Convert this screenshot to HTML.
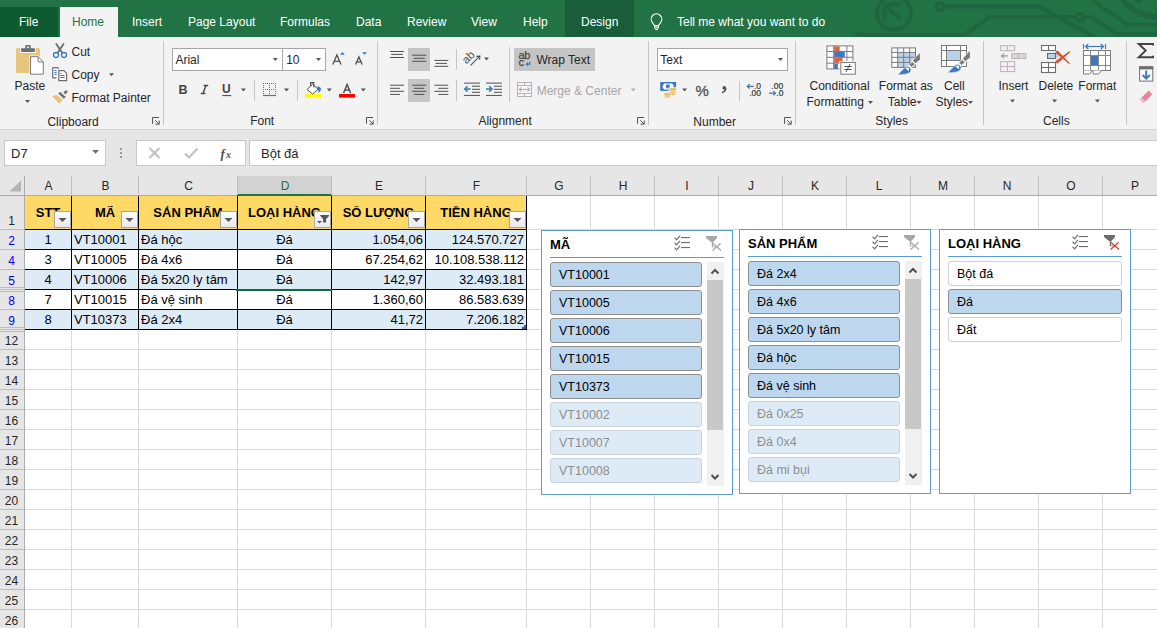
<!DOCTYPE html><html><head><meta charset="utf-8"><style>
*{margin:0;padding:0;box-sizing:border-box}
html,body{width:1157px;height:628px;overflow:hidden;background:#fff;font-family:"Liberation Sans",sans-serif;}
.ab{position:absolute}
.t{position:absolute;white-space:nowrap;line-height:1}
.ui{font-size:12px;color:#262626}
.tab{color:#fff;font-size:12px}

</style></head><body>
<div class="ab" style="left:0;top:0;width:1157px;height:37px;background:#217346"></div>
<div class="ab" style="left:0;top:7px;width:58px;height:30px;background:#0e5b31"></div>
<div class="ab" style="left:60px;top:7px;width:58px;height:30px;background:#f3f3f3"></div>
<div class="ab" style="left:565px;top:0;width:69px;height:37px;background:#1a5d3a"></div>
<svg class="ab" style="left:0;top:0;overflow:hidden" width="1157" height="37"><g fill="none" stroke="#1f6640" stroke-width="4"><circle cx="893.8" cy="13" r="17"/><polyline points="884.5,20.7 884.5,4.5 901,4.5"/><line x1="884.5" y1="4.5" x2="901" y2="19.5"/></g><g fill="none" stroke="#1f6640" stroke-width="3.8"><circle cx="940" cy="6.5" r="3.6"/><polyline points="943.5,6.5 1039,6.5 1095,37.5"/><polyline points="860,35 964,35 990,16.8 1076.5,16.8"/><circle cx="1080" cy="17" r="3.6"/><polyline points="1083.5,17 1091,17 1117,34 1160,34"/><polyline points="1092,0 1128,24.7 1160,24.7"/><circle cx="1160" cy="-32" r="49" stroke-width="5.6"/><circle cx="860" cy="37" r="3.6"/><polyline points="1080,28 1095,37.5"/></g><polygon points="1134,0 1143.5,0 1138.7,4.5" fill="#1f6640"/></svg>
<div class="t" style="left:19px;top:16px;font-size:12px;color:#fff">File</div>
<div class="t" style="left:72px;top:16px;font-size:12px;color:#217346">Home</div>
<div class="t" style="left:132px;top:16px;font-size:12px;color:#fff">Insert</div>
<div class="t" style="left:188px;top:16px;font-size:12px;color:#fff">Page Layout</div>
<div class="t" style="left:280px;top:16px;font-size:12px;color:#fff">Formulas</div>
<div class="t" style="left:356px;top:16px;font-size:12px;color:#fff">Data</div>
<div class="t" style="left:407px;top:16px;font-size:12px;color:#fff">Review</div>
<div class="t" style="left:471px;top:16px;font-size:12px;color:#fff">View</div>
<div class="t" style="left:523px;top:16px;font-size:12px;color:#fff">Help</div>
<div class="t" style="left:581px;top:16px;font-size:12px;color:#fff">Design</div>
<div class="t" style="left:677px;top:16px;font-size:12px;color:#fff">Tell me what you want to do</div>
<div class="ab" style="left:0;top:37px;width:1157px;height:92px;background:#f3f3f3"></div>
<div class="ab" style="left:0;top:129px;width:1157px;height:1px;background:#d5d5d5"></div>
<div class="ab" style="left:0;top:130px;width:1157px;height:46px;background:#e6e6e6"></div>
<div class="ab" style="left:4px;top:140px;width:102px;height:26px;background:#fff;border:1px solid #c6c6c6"></div>
<div class="ab" style="left:136px;top:140px;width:110px;height:26px;background:#fff;border:1px solid #c6c6c6"></div>
<div class="ab" style="left:249px;top:140px;width:920px;height:26px;background:#fff;border:1px solid #c6c6c6"></div>
<div class="t" style="left:11px;top:147px;font-size:13px;color:#262626">D7</div>
<div class="t" style="left:261px;top:147px;font-size:13px;color:#262626">Bột đá</div>
<div class="ab" style="left:0;top:176px;width:1157px;height:20px;background:#e6e6e6"></div>
<div class="ab" style="left:0;top:196px;width:24px;height:432px;background:#e6e6e6"></div>
<div class="ab" style="left:0;top:195px;width:1157px;height:1px;background:#ababab"></div>
<div class="ab" style="left:24px;top:176px;width:1px;height:452px;background:#ababab"></div>
<div class="ab" style="left:238px;top:176px;width:93px;height:18px;background:#d2d2d2"></div>
<div class="ab" style="left:237px;top:194px;width:95px;height:2px;background:#217346"></div>
<div class="ab" style="left:71px;top:176px;width:1px;height:19px;background:#bdbdbd"></div>
<div class="t" style="left:25px;width:47px;text-align:center;top:180px;font-size:12px;color:#262626">A</div>
<div class="ab" style="left:138px;top:176px;width:1px;height:19px;background:#bdbdbd"></div>
<div class="t" style="left:72px;width:67px;text-align:center;top:180px;font-size:12px;color:#262626">B</div>
<div class="ab" style="left:237px;top:176px;width:1px;height:19px;background:#bdbdbd"></div>
<div class="t" style="left:139px;width:99px;text-align:center;top:180px;font-size:12px;color:#262626">C</div>
<div class="ab" style="left:331px;top:176px;width:1px;height:19px;background:#bdbdbd"></div>
<div class="t" style="left:238px;width:94px;text-align:center;top:180px;font-size:12px;color:#217346">D</div>
<div class="ab" style="left:425px;top:176px;width:1px;height:19px;background:#bdbdbd"></div>
<div class="t" style="left:332px;width:94px;text-align:center;top:180px;font-size:12px;color:#262626">E</div>
<div class="ab" style="left:526px;top:176px;width:1px;height:19px;background:#bdbdbd"></div>
<div class="t" style="left:426px;width:101px;text-align:center;top:180px;font-size:12px;color:#262626">F</div>
<div class="ab" style="left:590px;top:176px;width:1px;height:19px;background:#bdbdbd"></div>
<div class="t" style="left:527px;width:64px;text-align:center;top:180px;font-size:12px;color:#262626">G</div>
<div class="ab" style="left:654px;top:176px;width:1px;height:19px;background:#bdbdbd"></div>
<div class="t" style="left:591px;width:64px;text-align:center;top:180px;font-size:12px;color:#262626">H</div>
<div class="ab" style="left:718px;top:176px;width:1px;height:19px;background:#bdbdbd"></div>
<div class="t" style="left:655px;width:64px;text-align:center;top:180px;font-size:12px;color:#262626">I</div>
<div class="ab" style="left:782px;top:176px;width:1px;height:19px;background:#bdbdbd"></div>
<div class="t" style="left:719px;width:64px;text-align:center;top:180px;font-size:12px;color:#262626">J</div>
<div class="ab" style="left:846px;top:176px;width:1px;height:19px;background:#bdbdbd"></div>
<div class="t" style="left:783px;width:64px;text-align:center;top:180px;font-size:12px;color:#262626">K</div>
<div class="ab" style="left:910px;top:176px;width:1px;height:19px;background:#bdbdbd"></div>
<div class="t" style="left:847px;width:64px;text-align:center;top:180px;font-size:12px;color:#262626">L</div>
<div class="ab" style="left:974px;top:176px;width:1px;height:19px;background:#bdbdbd"></div>
<div class="t" style="left:911px;width:64px;text-align:center;top:180px;font-size:12px;color:#262626">M</div>
<div class="ab" style="left:1038px;top:176px;width:1px;height:19px;background:#bdbdbd"></div>
<div class="t" style="left:975px;width:64px;text-align:center;top:180px;font-size:12px;color:#262626">N</div>
<div class="ab" style="left:1102px;top:176px;width:1px;height:19px;background:#bdbdbd"></div>
<div class="t" style="left:1039px;width:64px;text-align:center;top:180px;font-size:12px;color:#262626">O</div>
<div class="ab" style="left:1166px;top:176px;width:1px;height:19px;background:#bdbdbd"></div>
<div class="t" style="left:1103px;width:64px;text-align:center;top:180px;font-size:12px;color:#262626">P</div>
<div class="ab" style="left:25px;top:196px;width:1132px;height:432px;background:#fff"></div>
<div class="ab" style="left:71px;top:196px;width:1px;height:432px;background:#d9d9d9"></div>
<div class="ab" style="left:138px;top:196px;width:1px;height:432px;background:#d9d9d9"></div>
<div class="ab" style="left:237px;top:196px;width:1px;height:432px;background:#d9d9d9"></div>
<div class="ab" style="left:331px;top:196px;width:1px;height:432px;background:#d9d9d9"></div>
<div class="ab" style="left:425px;top:196px;width:1px;height:432px;background:#d9d9d9"></div>
<div class="ab" style="left:526px;top:196px;width:1px;height:432px;background:#d9d9d9"></div>
<div class="ab" style="left:590px;top:196px;width:1px;height:432px;background:#d9d9d9"></div>
<div class="ab" style="left:654px;top:196px;width:1px;height:432px;background:#d9d9d9"></div>
<div class="ab" style="left:718px;top:196px;width:1px;height:432px;background:#d9d9d9"></div>
<div class="ab" style="left:782px;top:196px;width:1px;height:432px;background:#d9d9d9"></div>
<div class="ab" style="left:846px;top:196px;width:1px;height:432px;background:#d9d9d9"></div>
<div class="ab" style="left:910px;top:196px;width:1px;height:432px;background:#d9d9d9"></div>
<div class="ab" style="left:974px;top:196px;width:1px;height:432px;background:#d9d9d9"></div>
<div class="ab" style="left:1038px;top:196px;width:1px;height:432px;background:#d9d9d9"></div>
<div class="ab" style="left:1102px;top:196px;width:1px;height:432px;background:#d9d9d9"></div>
<div class="ab" style="left:1166px;top:196px;width:1px;height:432px;background:#d9d9d9"></div>
<div class="ab" style="left:25px;top:229px;width:1132px;height:1px;background:#d9d9d9"></div>
<div class="ab" style="left:25px;top:249px;width:1132px;height:1px;background:#d9d9d9"></div>
<div class="ab" style="left:25px;top:269px;width:1132px;height:1px;background:#d9d9d9"></div>
<div class="ab" style="left:25px;top:289px;width:1132px;height:1px;background:#d9d9d9"></div>
<div class="ab" style="left:25px;top:309px;width:1132px;height:1px;background:#d9d9d9"></div>
<div class="ab" style="left:25px;top:329px;width:1132px;height:1px;background:#d9d9d9"></div>
<div class="ab" style="left:25px;top:349px;width:1132px;height:1px;background:#d9d9d9"></div>
<div class="ab" style="left:25px;top:369px;width:1132px;height:1px;background:#d9d9d9"></div>
<div class="ab" style="left:25px;top:389px;width:1132px;height:1px;background:#d9d9d9"></div>
<div class="ab" style="left:25px;top:409px;width:1132px;height:1px;background:#d9d9d9"></div>
<div class="ab" style="left:25px;top:429px;width:1132px;height:1px;background:#d9d9d9"></div>
<div class="ab" style="left:25px;top:449px;width:1132px;height:1px;background:#d9d9d9"></div>
<div class="ab" style="left:25px;top:469px;width:1132px;height:1px;background:#d9d9d9"></div>
<div class="ab" style="left:25px;top:489px;width:1132px;height:1px;background:#d9d9d9"></div>
<div class="ab" style="left:25px;top:509px;width:1132px;height:1px;background:#d9d9d9"></div>
<div class="ab" style="left:25px;top:529px;width:1132px;height:1px;background:#d9d9d9"></div>
<div class="ab" style="left:25px;top:549px;width:1132px;height:1px;background:#d9d9d9"></div>
<div class="ab" style="left:25px;top:569px;width:1132px;height:1px;background:#d9d9d9"></div>
<div class="ab" style="left:25px;top:589px;width:1132px;height:1px;background:#d9d9d9"></div>
<div class="ab" style="left:25px;top:609px;width:1132px;height:1px;background:#d9d9d9"></div>
<div class="ab" style="left:25px;top:629px;width:1132px;height:1px;background:#d9d9d9"></div>
<div class="ab" style="left:0;top:229px;width:24px;height:1px;background:#bdbdbd"></div>
<div class="t" style="left:0;width:23px;text-align:center;top:215px;font-size:12px;color:#262626">1</div>
<div class="ab" style="left:0;top:249px;width:24px;height:1px;background:#bdbdbd"></div>
<div class="t" style="left:0;width:23px;text-align:center;top:235px;font-size:12px;color:#0000ff">2</div>
<div class="ab" style="left:0;top:269px;width:24px;height:1px;background:#bdbdbd"></div>
<div class="t" style="left:0;width:23px;text-align:center;top:255px;font-size:12px;color:#0000ff">4</div>
<div class="ab" style="left:0;top:289px;width:24px;height:1px;background:#bdbdbd"></div>
<div class="t" style="left:0;width:23px;text-align:center;top:275px;font-size:12px;color:#0000ff">5</div>
<div class="ab" style="left:0;top:309px;width:24px;height:1px;background:#bdbdbd"></div>
<div class="t" style="left:0;width:23px;text-align:center;top:295px;font-size:12px;color:#0000ff">8</div>
<div class="ab" style="left:0;top:329px;width:24px;height:1px;background:#bdbdbd"></div>
<div class="t" style="left:0;width:23px;text-align:center;top:315px;font-size:12px;color:#0000ff">9</div>
<div class="ab" style="left:0;top:349px;width:24px;height:1px;background:#bdbdbd"></div>
<div class="t" style="left:0;width:23px;text-align:center;top:335px;font-size:12px;color:#262626">12</div>
<div class="ab" style="left:0;top:369px;width:24px;height:1px;background:#bdbdbd"></div>
<div class="t" style="left:0;width:23px;text-align:center;top:355px;font-size:12px;color:#262626">13</div>
<div class="ab" style="left:0;top:389px;width:24px;height:1px;background:#bdbdbd"></div>
<div class="t" style="left:0;width:23px;text-align:center;top:375px;font-size:12px;color:#262626">14</div>
<div class="ab" style="left:0;top:409px;width:24px;height:1px;background:#bdbdbd"></div>
<div class="t" style="left:0;width:23px;text-align:center;top:395px;font-size:12px;color:#262626">15</div>
<div class="ab" style="left:0;top:429px;width:24px;height:1px;background:#bdbdbd"></div>
<div class="t" style="left:0;width:23px;text-align:center;top:415px;font-size:12px;color:#262626">16</div>
<div class="ab" style="left:0;top:449px;width:24px;height:1px;background:#bdbdbd"></div>
<div class="t" style="left:0;width:23px;text-align:center;top:435px;font-size:12px;color:#262626">17</div>
<div class="ab" style="left:0;top:469px;width:24px;height:1px;background:#bdbdbd"></div>
<div class="t" style="left:0;width:23px;text-align:center;top:455px;font-size:12px;color:#262626">18</div>
<div class="ab" style="left:0;top:489px;width:24px;height:1px;background:#bdbdbd"></div>
<div class="t" style="left:0;width:23px;text-align:center;top:475px;font-size:12px;color:#262626">19</div>
<div class="ab" style="left:0;top:509px;width:24px;height:1px;background:#bdbdbd"></div>
<div class="t" style="left:0;width:23px;text-align:center;top:495px;font-size:12px;color:#262626">20</div>
<div class="ab" style="left:0;top:529px;width:24px;height:1px;background:#bdbdbd"></div>
<div class="t" style="left:0;width:23px;text-align:center;top:515px;font-size:12px;color:#262626">21</div>
<div class="ab" style="left:0;top:549px;width:24px;height:1px;background:#bdbdbd"></div>
<div class="t" style="left:0;width:23px;text-align:center;top:535px;font-size:12px;color:#262626">22</div>
<div class="ab" style="left:0;top:569px;width:24px;height:1px;background:#bdbdbd"></div>
<div class="t" style="left:0;width:23px;text-align:center;top:555px;font-size:12px;color:#262626">23</div>
<div class="ab" style="left:0;top:589px;width:24px;height:1px;background:#bdbdbd"></div>
<div class="t" style="left:0;width:23px;text-align:center;top:575px;font-size:12px;color:#262626">24</div>
<div class="ab" style="left:0;top:609px;width:24px;height:1px;background:#bdbdbd"></div>
<div class="t" style="left:0;width:23px;text-align:center;top:595px;font-size:12px;color:#262626">25</div>
<div class="ab" style="left:0;top:629px;width:24px;height:1px;background:#bdbdbd"></div>
<div class="t" style="left:0;width:23px;text-align:center;top:615px;font-size:12px;color:#262626">26</div>
<div class="ab" style="left:0;top:287px;width:24px;height:1px;background:#bdbdbd"></div>
<div class="ab" style="left:0;top:291px;width:24px;height:1px;background:#bdbdbd"></div>
<div class="ab" style="left:0;top:327px;width:24px;height:1px;background:#bdbdbd"></div>
<div class="ab" style="left:0;top:331px;width:24px;height:1px;background:#bdbdbd"></div>
<svg class="ab" style="left:0;top:176px" width="24" height="20"><polygon points="9.5,15.5 21,15.5 21,4.5" fill="#b4b4b4"/></svg>
<div class="ab" style="left:25px;top:196px;width:501px;height:33px;background:#ffd966"></div>
<div class="ab" style="left:25px;top:230px;width:501px;height:19px;background:#ddebf7"></div>
<div class="ab" style="left:25px;top:270px;width:501px;height:19px;background:#ddebf7"></div>
<div class="ab" style="left:25px;top:310px;width:501px;height:19px;background:#ddebf7"></div>
<div class="ab" style="left:71px;top:196px;width:1px;height:134px;background:#000"></div>
<div class="ab" style="left:138px;top:196px;width:1px;height:134px;background:#000"></div>
<div class="ab" style="left:237px;top:196px;width:1px;height:134px;background:#000"></div>
<div class="ab" style="left:331px;top:196px;width:1px;height:134px;background:#000"></div>
<div class="ab" style="left:425px;top:196px;width:1px;height:134px;background:#000"></div>
<div class="ab" style="left:526px;top:196px;width:1px;height:134px;background:#000"></div>
<div class="ab" style="left:25px;top:229px;width:502px;height:1px;background:#000"></div>
<div class="ab" style="left:25px;top:249px;width:502px;height:1px;background:#000"></div>
<div class="ab" style="left:25px;top:269px;width:502px;height:1px;background:#000"></div>
<div class="ab" style="left:25px;top:289px;width:502px;height:1px;background:#000"></div>
<div class="ab" style="left:25px;top:309px;width:502px;height:1px;background:#000"></div>
<div class="ab" style="left:25px;top:329px;width:502px;height:1px;background:#000"></div>
<div class="t" style="left:25px;width:46px;text-align:center;top:206px;font-size:13px;font-weight:bold;color:#000;overflow:hidden">STT</div>
<div class="t" style="left:72px;width:66px;text-align:center;top:206px;font-size:13px;font-weight:bold;color:#000;overflow:hidden">MÃ</div>
<div class="t" style="left:139px;width:98px;text-align:center;top:206px;font-size:13px;font-weight:bold;color:#000;overflow:hidden">SẢN PHẨM</div>
<div class="t" style="left:238px;width:93px;text-align:center;top:206px;font-size:13px;font-weight:bold;color:#000;overflow:hidden">LOẠI HÀNG</div>
<div class="t" style="left:332px;width:93px;text-align:center;top:206px;font-size:13px;font-weight:bold;color:#000;overflow:hidden">SỐ LƯỢNG</div>
<div class="t" style="left:426px;width:100px;text-align:center;top:206px;font-size:13px;font-weight:bold;color:#000;overflow:hidden">TIỀN HÀNG</div>
<div class="ab" style="left:54px;top:211px;width:17px;height:17px;background:linear-gradient(#fdfdfd,#e9e9ee);border:1px solid #a6a6a6"></div>
<svg class="ab" style="left:54px;top:211px" width="17" height="17"><polygon points="4.5,7 12.5,7 8.5,11" fill="#555"/></svg>
<div class="ab" style="left:121px;top:211px;width:17px;height:17px;background:linear-gradient(#fdfdfd,#e9e9ee);border:1px solid #a6a6a6"></div>
<svg class="ab" style="left:121px;top:211px" width="17" height="17"><polygon points="4.5,7 12.5,7 8.5,11" fill="#555"/></svg>
<div class="ab" style="left:220px;top:211px;width:17px;height:17px;background:linear-gradient(#fdfdfd,#e9e9ee);border:1px solid #a6a6a6"></div>
<svg class="ab" style="left:220px;top:211px" width="17" height="17"><polygon points="4.5,7 12.5,7 8.5,11" fill="#555"/></svg>
<div class="ab" style="left:314px;top:211px;width:17px;height:17px;background:linear-gradient(#fdfdfd,#e9e9ee);border:1px solid #a6a6a6"></div>
<svg class="ab" style="left:314px;top:211px" width="17" height="17"><polygon points="3,10 8,10 5.5,12.5" fill="#555"/><polygon points="6.3,4 15,4 15,5 12.1,8 12.1,11.6 9.1,11.6 9.1,8 6.3,5" fill="#555"/></svg>
<div class="ab" style="left:408px;top:211px;width:17px;height:17px;background:linear-gradient(#fdfdfd,#e9e9ee);border:1px solid #a6a6a6"></div>
<svg class="ab" style="left:408px;top:211px" width="17" height="17"><polygon points="4.5,7 12.5,7 8.5,11" fill="#555"/></svg>
<div class="ab" style="left:509px;top:211px;width:17px;height:17px;background:linear-gradient(#fdfdfd,#e9e9ee);border:1px solid #a6a6a6"></div>
<svg class="ab" style="left:509px;top:211px" width="17" height="17"><polygon points="4.5,7 12.5,7 8.5,11" fill="#555"/></svg>
<div class="t" style="left:25px;width:46px;text-align:center;top:233px;font-size:13px;color:#000">1</div>
<div class="t" style="left:74px;top:233px;font-size:13px;color:#000">VT10001</div>
<div class="t" style="left:141px;top:233px;font-size:13px;color:#000">Đá hộc</div>
<div class="t" style="left:238px;width:93px;text-align:center;top:233px;font-size:13px;color:#000">Đá</div>
<div class="t" style="left:332px;width:91px;text-align:right;top:233px;font-size:13px;color:#000">1.054,06</div>
<div class="t" style="left:426px;width:98px;text-align:right;top:233px;font-size:13px;color:#000">124.570.727</div>
<div class="t" style="left:25px;width:46px;text-align:center;top:253px;font-size:13px;color:#000">3</div>
<div class="t" style="left:74px;top:253px;font-size:13px;color:#000">VT10005</div>
<div class="t" style="left:141px;top:253px;font-size:13px;color:#000">Đá 4x6</div>
<div class="t" style="left:238px;width:93px;text-align:center;top:253px;font-size:13px;color:#000">Đá</div>
<div class="t" style="left:332px;width:91px;text-align:right;top:253px;font-size:13px;color:#000">67.254,62</div>
<div class="t" style="left:426px;width:98px;text-align:right;top:253px;font-size:13px;color:#000">10.108.538.112</div>
<div class="t" style="left:25px;width:46px;text-align:center;top:273px;font-size:13px;color:#000">4</div>
<div class="t" style="left:74px;top:273px;font-size:13px;color:#000">VT10006</div>
<div class="t" style="left:141px;top:273px;font-size:13px;color:#000">Đá 5x20 ly tâm</div>
<div class="t" style="left:238px;width:93px;text-align:center;top:273px;font-size:13px;color:#000">Đá</div>
<div class="t" style="left:332px;width:91px;text-align:right;top:273px;font-size:13px;color:#000">142,97</div>
<div class="t" style="left:426px;width:98px;text-align:right;top:273px;font-size:13px;color:#000">32.493.181</div>
<div class="t" style="left:25px;width:46px;text-align:center;top:293px;font-size:13px;color:#000">7</div>
<div class="t" style="left:74px;top:293px;font-size:13px;color:#000">VT10015</div>
<div class="t" style="left:141px;top:293px;font-size:13px;color:#000">Đá vệ sinh</div>
<div class="t" style="left:238px;width:93px;text-align:center;top:293px;font-size:13px;color:#000">Đá</div>
<div class="t" style="left:332px;width:91px;text-align:right;top:293px;font-size:13px;color:#000">1.360,60</div>
<div class="t" style="left:426px;width:98px;text-align:right;top:293px;font-size:13px;color:#000">86.583.639</div>
<div class="t" style="left:25px;width:46px;text-align:center;top:313px;font-size:13px;color:#000">8</div>
<div class="t" style="left:74px;top:313px;font-size:13px;color:#000">VT10373</div>
<div class="t" style="left:141px;top:313px;font-size:13px;color:#000">Đá 2x4</div>
<div class="t" style="left:238px;width:93px;text-align:center;top:313px;font-size:13px;color:#000">Đá</div>
<div class="t" style="left:332px;width:91px;text-align:right;top:313px;font-size:13px;color:#000">41,72</div>
<div class="t" style="left:426px;width:98px;text-align:right;top:313px;font-size:13px;color:#000">7.206.182</div>
<div class="ab" style="left:236px;top:289px;width:96px;height:2px;background:#12693a"></div>
<svg class="ab" style="left:520px;top:323px" width="8" height="8"><path d="M4,2 h2 v4 h-4 v-2 h2 z" fill="#4155b0"/></svg>
<div class="ab" style="left:541px;top:230px;width:192px;height:265px;background:#fff;border:1px solid #5b9bd5"></div>
<div class="t" style="left:550px;top:237.5px;font-size:13px;font-weight:bold;color:#000">MÃ</div>
<div class="ab" style="left:550px;top:257px;width:174px;height:1px;background:#5b9bd5"></div>
<div class="ab" style="left:550px;top:262px;width:152px;height:25px;background:#bdd7ee;border:1px solid #8f8f8f;border-radius:3px"></div>
<div class="t" style="left:559px;top:268.5px;font-size:12.5px;color:#000">VT10001</div>
<div class="ab" style="left:550px;top:290px;width:152px;height:25px;background:#bdd7ee;border:1px solid #8f8f8f;border-radius:3px"></div>
<div class="t" style="left:559px;top:296.5px;font-size:12.5px;color:#000">VT10005</div>
<div class="ab" style="left:550px;top:318px;width:152px;height:25px;background:#bdd7ee;border:1px solid #8f8f8f;border-radius:3px"></div>
<div class="t" style="left:559px;top:324.5px;font-size:12.5px;color:#000">VT10006</div>
<div class="ab" style="left:550px;top:346px;width:152px;height:25px;background:#bdd7ee;border:1px solid #8f8f8f;border-radius:3px"></div>
<div class="t" style="left:559px;top:352.5px;font-size:12.5px;color:#000">VT10015</div>
<div class="ab" style="left:550px;top:374px;width:152px;height:25px;background:#bdd7ee;border:1px solid #8f8f8f;border-radius:3px"></div>
<div class="t" style="left:559px;top:380.5px;font-size:12.5px;color:#000">VT10373</div>
<div class="ab" style="left:550px;top:402px;width:152px;height:25px;background:#ddebf7;border:1px solid #c9d3dd;border-radius:3px"></div>
<div class="t" style="left:559px;top:408.5px;font-size:12.5px;color:#8f8f8f">VT10002</div>
<div class="ab" style="left:550px;top:430px;width:152px;height:25px;background:#ddebf7;border:1px solid #c9d3dd;border-radius:3px"></div>
<div class="t" style="left:559px;top:436.5px;font-size:12.5px;color:#8f8f8f">VT10007</div>
<div class="ab" style="left:550px;top:458px;width:152px;height:25px;background:#ddebf7;border:1px solid #c9d3dd;border-radius:3px"></div>
<div class="t" style="left:559px;top:464.5px;font-size:12.5px;color:#8f8f8f">VT10008</div>
<div class="ab" style="left:707px;top:262px;width:17px;height:224px;background:#f0f0f0"></div>
<div class="ab" style="left:707px;top:280px;width:16px;height:150px;background:#c8c8c8"></div>
<svg class="ab" style="left:707px;top:262px" width="17" height="224"><polyline points="4.5,11.5 8,8 11.5,11.5" fill="none" stroke="#505050" stroke-width="2"/><polyline points="4.5,213 8,216.5 11.5,213" fill="none" stroke="#505050" stroke-width="2"/></svg>
<svg class="ab" style="left:674px;top:235px" width="18" height="18"><g fill="none" stroke="#6d6d6d" stroke-width="1.2"><polyline points="0.6,2.6 2.6,4.8 6,0.8"/><polyline points="0.6,7.6 2.6,9.8 6,5.8"/><polyline points="0.6,12.7 2.6,14.9 6,10.9"/></g><g fill="#6d6d6d"><rect x="7" y="2" width="9" height="1.1"/><rect x="7" y="7" width="9" height="1.1"/><rect x="7" y="12" width="9" height="1.1"/></g></svg>
<svg class="ab" style="left:705px;top:235px" width="20" height="20"><polygon points="1,1 12,1 12,3 8,7.5 8,11.5 10,11.5 10,12.3 6.8,12.3 6.8,7.5 1,3" fill="#a8a8a8"/><g stroke="#a8a8a8" stroke-width="1.3"><line x1="7.5" y1="15.5" x2="15.5" y2="8.5"/><line x1="8" y1="8.5" x2="16" y2="15.5"/></g></svg>
<div class="ab" style="left:739px;top:229px;width:192px;height:265px;background:#fff;border:1px solid #5b9bd5"></div>
<div class="t" style="left:748px;top:236.5px;font-size:13px;font-weight:bold;color:#000">SẢN PHẨM</div>
<div class="ab" style="left:748px;top:256px;width:174px;height:1px;background:#5b9bd5"></div>
<div class="ab" style="left:748px;top:261px;width:152px;height:25px;background:#bdd7ee;border:1px solid #8f8f8f;border-radius:3px"></div>
<div class="t" style="left:757px;top:267.5px;font-size:12.5px;color:#000">Đá 2x4</div>
<div class="ab" style="left:748px;top:289px;width:152px;height:25px;background:#bdd7ee;border:1px solid #8f8f8f;border-radius:3px"></div>
<div class="t" style="left:757px;top:295.5px;font-size:12.5px;color:#000">Đá 4x6</div>
<div class="ab" style="left:748px;top:317px;width:152px;height:25px;background:#bdd7ee;border:1px solid #8f8f8f;border-radius:3px"></div>
<div class="t" style="left:757px;top:323.5px;font-size:12.5px;color:#000">Đá 5x20 ly tâm</div>
<div class="ab" style="left:748px;top:345px;width:152px;height:25px;background:#bdd7ee;border:1px solid #8f8f8f;border-radius:3px"></div>
<div class="t" style="left:757px;top:351.5px;font-size:12.5px;color:#000">Đá hộc</div>
<div class="ab" style="left:748px;top:373px;width:152px;height:25px;background:#bdd7ee;border:1px solid #8f8f8f;border-radius:3px"></div>
<div class="t" style="left:757px;top:379.5px;font-size:12.5px;color:#000">Đá vệ sinh</div>
<div class="ab" style="left:748px;top:401px;width:152px;height:25px;background:#ddebf7;border:1px solid #c9d3dd;border-radius:3px"></div>
<div class="t" style="left:757px;top:407.5px;font-size:12.5px;color:#8f8f8f">Đá 0x25</div>
<div class="ab" style="left:748px;top:429px;width:152px;height:25px;background:#ddebf7;border:1px solid #c9d3dd;border-radius:3px"></div>
<div class="t" style="left:757px;top:435.5px;font-size:12.5px;color:#8f8f8f">Đá 0x4</div>
<div class="ab" style="left:748px;top:457px;width:152px;height:25px;background:#ddebf7;border:1px solid #c9d3dd;border-radius:3px"></div>
<div class="t" style="left:757px;top:463.5px;font-size:12.5px;color:#8f8f8f">Đá mi bụi</div>
<div class="ab" style="left:905px;top:261px;width:17px;height:224px;background:#f0f0f0"></div>
<div class="ab" style="left:905px;top:279px;width:16px;height:150px;background:#c8c8c8"></div>
<svg class="ab" style="left:905px;top:261px" width="17" height="224"><polyline points="4.5,11.5 8,8 11.5,11.5" fill="none" stroke="#505050" stroke-width="2"/><polyline points="4.5,213 8,216.5 11.5,213" fill="none" stroke="#505050" stroke-width="2"/></svg>
<svg class="ab" style="left:872px;top:234px" width="18" height="18"><g fill="none" stroke="#6d6d6d" stroke-width="1.2"><polyline points="0.6,2.6 2.6,4.8 6,0.8"/><polyline points="0.6,7.6 2.6,9.8 6,5.8"/><polyline points="0.6,12.7 2.6,14.9 6,10.9"/></g><g fill="#6d6d6d"><rect x="7" y="2" width="9" height="1.1"/><rect x="7" y="7" width="9" height="1.1"/><rect x="7" y="12" width="9" height="1.1"/></g></svg>
<svg class="ab" style="left:903px;top:234px" width="20" height="20"><polygon points="1,1 12,1 12,3 8,7.5 8,11.5 10,11.5 10,12.3 6.8,12.3 6.8,7.5 1,3" fill="#a8a8a8"/><g stroke="#a8a8a8" stroke-width="1.3"><line x1="7.5" y1="15.5" x2="15.5" y2="8.5"/><line x1="8" y1="8.5" x2="16" y2="15.5"/></g></svg>
<div class="ab" style="left:939px;top:229px;width:192px;height:265px;background:#fff;border:1px solid #5b9bd5"></div>
<div class="t" style="left:948px;top:236.5px;font-size:13px;font-weight:bold;color:#000">LOẠI HÀNG</div>
<div class="ab" style="left:948px;top:256px;width:174px;height:1px;background:#5b9bd5"></div>
<div class="ab" style="left:948px;top:261px;width:174px;height:25px;background:#fff;border:1px solid #d0d0d0;border-radius:3px"></div>
<div class="t" style="left:957px;top:267.5px;font-size:12.5px;color:#000">Bột đá</div>
<div class="ab" style="left:948px;top:289px;width:174px;height:25px;background:#bdd7ee;border:1px solid #8f8f8f;border-radius:3px"></div>
<div class="t" style="left:957px;top:295.5px;font-size:12.5px;color:#000">Đá</div>
<div class="ab" style="left:948px;top:317px;width:174px;height:25px;background:#fff;border:1px solid #d0d0d0;border-radius:3px"></div>
<div class="t" style="left:957px;top:323.5px;font-size:12.5px;color:#000">Đất</div>
<svg class="ab" style="left:1072px;top:234px" width="18" height="18"><g fill="none" stroke="#6d6d6d" stroke-width="1.2"><polyline points="0.6,2.6 2.6,4.8 6,0.8"/><polyline points="0.6,7.6 2.6,9.8 6,5.8"/><polyline points="0.6,12.7 2.6,14.9 6,10.9"/></g><g fill="#6d6d6d"><rect x="7" y="2" width="9" height="1.1"/><rect x="7" y="7" width="9" height="1.1"/><rect x="7" y="12" width="9" height="1.1"/></g></svg>
<svg class="ab" style="left:1103px;top:234px" width="20" height="20"><polygon points="1,1 12,1 12,3 8,7.5 8,11.5 10,11.5 10,12.3 6.8,12.3 6.8,7.5 1,3" fill="#6d6d6d"/><g stroke="#e0402a" stroke-width="1.3"><line x1="7.5" y1="15.5" x2="15.5" y2="8.5"/><line x1="8" y1="8.5" x2="16" y2="15.5"/></g></svg>
<div class="ab" style="left:163px;top:41px;width:1px;height:84px;background:#c6c6c6"></div>
<div class="ab" style="left:377px;top:41px;width:1px;height:84px;background:#c6c6c6"></div>
<div class="ab" style="left:648px;top:41px;width:1px;height:84px;background:#c6c6c6"></div>
<div class="ab" style="left:795px;top:41px;width:1px;height:84px;background:#c6c6c6"></div>
<div class="ab" style="left:983px;top:41px;width:1px;height:84px;background:#c6c6c6"></div>
<div class="ab" style="left:1126px;top:41px;width:1px;height:84px;background:#c6c6c6"></div>
<div class="ab" style="left:254px;top:80px;width:1px;height:21px;background:#c6c6c6"></div>
<div class="ab" style="left:297px;top:80px;width:1px;height:21px;background:#c6c6c6"></div>
<div class="ab" style="left:456px;top:49px;width:1px;height:21px;background:#c6c6c6"></div>
<div class="ab" style="left:456px;top:80px;width:1px;height:21px;background:#c6c6c6"></div>
<div class="ab" style="left:509px;top:47px;width:1px;height:55px;background:#c6c6c6"></div>
<div class="ab" style="left:739px;top:81px;width:1px;height:20px;background:#c6c6c6"></div>
<div class="ab" style="left:408px;top:48px;width:22px;height:23px;background:#c5c5c5"></div>
<div class="ab" style="left:408px;top:79px;width:22px;height:23px;background:#c5c5c5"></div>
<div class="ab" style="left:514px;top:48px;width:81px;height:23px;background:#c5c5c5"></div>
<div class="ab" style="left:172px;top:48px;width:111px;height:23px;background:#fff;border:1px solid #a6a6a6"></div>
<div class="ab" style="left:282px;top:48px;width:44px;height:23px;background:#fff;border:1px solid #a6a6a6"></div>
<div class="ab" style="left:657px;top:48px;width:131px;height:23px;background:#fff;border:1px solid #a6a6a6"></div>
<div class="t" style="left:14.5px;top:79.84px;font-size:12px;color:#262626;font-weight:normal;">Paste</div>
<div class="t" style="left:71.5px;top:45.54px;font-size:12px;color:#262626;font-weight:normal;">Cut</div>
<div class="t" style="left:71.5px;top:69.24px;font-size:12px;color:#262626;font-weight:normal;">Copy</div>
<div class="t" style="left:71.5px;top:91.64px;font-size:12px;color:#262626;font-weight:normal;">Format Painter</div>
<div class="t" style="left:47.4px;top:115.64px;font-size:12px;color:#262626;font-weight:normal;">Clipboard</div>
<div class="t" style="left:175.4px;top:54.44px;font-size:12px;color:#262626;font-weight:normal;">Arial</div>
<div class="t" style="left:286.2px;top:54.44px;font-size:12px;color:#262626;font-weight:normal;">10</div>
<div class="t" style="left:250.2px;top:115.34px;font-size:12px;color:#262626;font-weight:normal;">Font</div>
<div class="t" style="left:536.4px;top:53.84px;font-size:12px;color:#262626;font-weight:normal;">Wrap Text</div>
<div class="t" style="left:536.7px;top:84.84px;font-size:12px;color:#a6a6a6;font-weight:normal;">Merge &amp; Center</div>
<div class="t" style="left:478.4px;top:115.44px;font-size:12px;color:#262626;font-weight:normal;">Alignment</div>
<div class="t" style="left:660.3px;top:53.64px;font-size:12px;color:#262626;font-weight:normal;">Text</div>
<div class="t" style="left:693.3px;top:115.54px;font-size:12px;color:#262626;font-weight:normal;">Number</div>
<div class="t" style="left:809.5px;top:79.74px;font-size:12px;color:#262626;font-weight:normal;">Conditional</div>
<div class="t" style="left:806.5px;top:96.04px;font-size:12px;color:#262626;font-weight:normal;">Formatting</div>
<div class="t" style="left:878.8px;top:79.74px;font-size:12px;color:#262626;font-weight:normal;">Format as</div>
<div class="t" style="left:887.8px;top:96.04px;font-size:12px;color:#262626;font-weight:normal;">Table</div>
<div class="t" style="left:944px;top:79.74px;font-size:12px;color:#262626;font-weight:normal;">Cell</div>
<div class="t" style="left:935.4px;top:96.04px;font-size:12px;color:#262626;font-weight:normal;">Styles</div>
<div class="t" style="left:875.3px;top:114.84px;font-size:12px;color:#262626;font-weight:normal;">Styles</div>
<div class="t" style="left:998.4px;top:79.64px;font-size:12px;color:#262626;font-weight:normal;">Insert</div>
<div class="t" style="left:1038.5px;top:79.64px;font-size:12px;color:#262626;font-weight:normal;">Delete</div>
<div class="t" style="left:1078.3px;top:79.64px;font-size:12px;color:#262626;font-weight:normal;">Format</div>
<div class="t" style="left:1043px;top:115.24px;font-size:12px;color:#262626;font-weight:normal;">Cells</div>
<svg class="ab" style="left:0;top:0" width="1157" height="628"><polygon points="25.0,100 30.0,100 27.5,103" fill="#555"/><polygon points="109.0,73.3 114.0,73.3 111.5,76.3" fill="#555"/><polygon points="240.9,88.5 245.9,88.5 243.4,91.5" fill="#555"/><polygon points="284.0,88.5 289.0,88.5 286.5,91.5" fill="#555"/><polygon points="326.8,88.5 331.8,88.5 329.3,91.5" fill="#555"/><polygon points="360.8,88.5 365.8,88.5 363.3,91.5" fill="#555"/><polygon points="484.0,57.5 489.0,57.5 486.5,60.5" fill="#555"/><polygon points="682.1,88.5 687.1,88.5 684.6,91.5" fill="#555"/><polygon points="272.8,58 277.8,58 275.3,61" fill="#555"/><polygon points="316.0,58 321.0,58 318.5,61" fill="#555"/><polygon points="778.0,58 783.0,58 780.5,61" fill="#555"/><polygon points="630.8,88.5 635.8,88.5 633.3,91.5" fill="#b0b0b0"/><polygon points="92.0,150 99.0,150 95.5,153.8" fill="#6d6d6d"/><polygon points="868.0,101 873.0,101 870.5,104" fill="#555"/><polygon points="916.5,101 921.5,101 919,104" fill="#555"/><polygon points="968.0,101 973.0,101 970.5,104" fill="#555"/><polygon points="1010.0,99.5 1015.0,99.5 1012.5,102.5" fill="#555"/><polygon points="1052.1,99.5 1057.1,99.5 1054.6,102.5" fill="#555"/><polygon points="1094.9,99.5 1099.9,99.5 1097.4,102.5" fill="#555"/><g fill="none" stroke="#505050" stroke-width="1"><polyline points="152.5,123.7 152.5,117.5 159.0,117.5"/><line x1="155.3" y1="120.3" x2="159.0" y2="124"/><polyline points="155.5,124.2 159.2,124.2 159.2,120.5"/></g><g fill="none" stroke="#505050" stroke-width="1"><polyline points="366.5,123.7 366.5,117.5 373.0,117.5"/><line x1="369.3" y1="120.3" x2="373.0" y2="124"/><polyline points="369.5,124.2 373.2,124.2 373.2,120.5"/></g><g fill="none" stroke="#505050" stroke-width="1"><polyline points="637.5,123.7 637.5,117.5 644.0,117.5"/><line x1="640.3" y1="120.3" x2="644.0" y2="124"/><polyline points="640.5,124.2 644.2,124.2 644.2,120.5"/></g><g fill="none" stroke="#505050" stroke-width="1"><polyline points="784.5,123.7 784.5,117.5 791.0,117.5"/><line x1="787.3" y1="120.3" x2="791.0" y2="124"/><polyline points="787.5,124.2 791.2,124.2 791.2,120.5"/></g><rect x="16" y="48" width="24" height="25" rx="1.5" fill="#e9c47c"/><rect x="20" y="47.5" width="16" height="5.5" fill="#f3f3f3"/><rect x="21" y="48.3" width="14" height="3.6" rx="0.8" fill="#6d6d6d"/><rect x="25.3" y="45" width="5.4" height="4" rx="1" fill="#6d6d6d"/><circle cx="28" cy="47.3" r="1" fill="#f3f3f3"/><path d="M29.3,55.5 h9.2 l6,6 v14 h-15.2 z" fill="#f3f3f3"/><path d="M30.5,56.7 h7.6 l5.2,5.2 v12.3 h-12.8 z" fill="#fff" stroke="#7a7a7a" stroke-width="1"/><path d="M38.1,56.7 v5.2 h5.2" fill="none" stroke="#7a7a7a" stroke-width="1"/><g stroke="#6d6d6d" stroke-width="1.8" stroke-linecap="round"><line x1="56.3" y1="44" x2="62" y2="52.5"/><line x1="63.5" y1="44" x2="57.8" y2="52.5"/></g><g fill="none" stroke="#3b78c0" stroke-width="1.3"><circle cx="56" cy="55" r="2.5"/><circle cx="64" cy="55" r="2.5"/></g><path d="M52.7,67.7 h4.7 l1.5,1.5 v1.5 h-2.2 v7.2 h-4 z" fill="#fff" stroke="none"/><path d="M52.7,67.7 h4.7 l1.5,1.5 M52.7,67.7 v10.2 h3.7" fill="none" stroke="#6d6d6d" stroke-width="1.2"/><path d="M58.9,70.7 h5 l2.7,2.7 v7.2 h-7.7 z" fill="#fff" stroke="#6d6d6d" stroke-width="1.2"/><g stroke="#3b78c0" stroke-width="1"><line x1="54.2" y1="70.4" x2="56.6" y2="70.4"/><line x1="54.2" y1="72.4" x2="56.6" y2="72.4"/><line x1="54.2" y1="74.3" x2="56.6" y2="74.3"/><line x1="60.3" y1="73.4" x2="61.7" y2="73.4"/><line x1="60.3" y1="75.5" x2="64.7" y2="75.5"/><line x1="60.3" y1="77.5" x2="64.7" y2="77.5"/></g><polygon points="52.2,96.3 56.4,94.8 62.7,99.7 59.2,103.7" fill="#e9c47c"/><polygon points="58.1,93.3 60.2,92 65.8,97.1 63.7,98.7" fill="#6d6d6d"/><polygon points="63.4,92.4 66.1,90 67.8,91.7 65.3,94.3" fill="#6d6d6d"/><g fill="none" stroke="#505050" stroke-width="1.3"><polyline points="332.8,64.6 336.9,54.9 341,64.6"/><line x1="334.3" y1="61.3" x2="339.5" y2="61.3"/><polyline points="355.6,64.6 358.9,57 362.2,64.6"/><line x1="356.8" y1="62" x2="361" y2="62"/></g><polygon points="340,54.8 342.4,52 344.9,54.8" fill="#3b78c0"/><polygon points="362,52.2 367,52.2 364.5,54.8" fill="#3b78c0"/><text x="178.4" y="94" font-family="Liberation Sans" font-weight="bold" font-size="12.5" fill="#444">B</text><g stroke="#444" stroke-width="1.4" fill="none"><line x1="203.6" y1="85.5" x2="208.2" y2="85.5"/><line x1="200.8" y1="93.5" x2="205.4" y2="93.5"/><line x1="205.9" y1="85.5" x2="203.1" y2="93.5"/></g><text x="222" y="93.4" font-family="Liberation Sans" font-weight="bold" font-size="12" fill="#444">U</text><line x1="222.3" y1="95.6" x2="231.2" y2="95.6" stroke="#444" stroke-width="1"/><g stroke="#6d6d6d" stroke-width="1" stroke-dasharray="1,1" fill="none"><line x1="263" y1="83.5" x2="276" y2="83.5"/><line x1="263" y1="89.5" x2="276" y2="89.5"/><line x1="263.5" y1="83" x2="263.5" y2="95"/><line x1="269.5" y1="83" x2="269.5" y2="95"/><line x1="275.5" y1="83" x2="275.5" y2="95"/></g><line x1="263" y1="95.5" x2="276" y2="95.5" stroke="#6d6d6d" stroke-width="1.2"/><rect x="305" y="94" width="16" height="3.6" fill="#ffff00"/><polygon points="307,89.4 312.6,84.2 318.2,89.2 312.6,94" fill="#fff" stroke="#505050" stroke-width="1"/><path d="M310.6,86 v-3.4 h3.2 v5" fill="none" stroke="#505050" stroke-width="1.1"/><path d="M317.3,86 Q321.6,87 320.9,90 L318.5,93.3 Q318.8,90.5 317.6,88.8 z" fill="#3b78c0"/><rect x="339" y="94" width="16" height="3.6" fill="#ff0000"/><g fill="none" stroke="#505050" stroke-width="1.5"><polyline points="343.6,93 347.1,84.5 350.6,93"/><line x1="344.8" y1="90" x2="349.4" y2="90"/></g><rect x="390.0" y="51.0" width="14" height="1" fill="#505050"/><rect x="391.3" y="53.9" width="11.4" height="1" fill="#505050"/><rect x="390.0" y="57.0" width="14" height="1" fill="#505050"/><rect x="412.2" y="54.7" width="14" height="1" fill="#505050"/><rect x="413.5" y="57.8" width="11.4" height="1" fill="#505050"/><rect x="412.2" y="60.8" width="14" height="1" fill="#505050"/><rect x="434.3" y="59.9" width="14" height="1" fill="#505050"/><rect x="435.6" y="62.9" width="11.4" height="1" fill="#505050"/><rect x="434.3" y="65.8" width="14" height="1" fill="#505050"/><rect x="390" y="84.7" width="14" height="1" fill="#505050"/><rect x="390" y="87.8" width="10" height="1" fill="#505050"/><rect x="390" y="90.8" width="14" height="1" fill="#505050"/><rect x="390" y="93.9" width="10" height="1" fill="#505050"/><rect x="412.2" y="84.7" width="14" height="1" fill="#505050"/><rect x="414.2" y="87.8" width="10" height="1" fill="#505050"/><rect x="412.2" y="90.8" width="14" height="1" fill="#505050"/><rect x="414.2" y="93.9" width="10" height="1" fill="#505050"/><rect x="434.3" y="84.7" width="14" height="1" fill="#505050"/><rect x="438.3" y="87.8" width="10" height="1" fill="#505050"/><rect x="434.3" y="90.8" width="14" height="1" fill="#505050"/><rect x="438.3" y="93.9" width="10" height="1" fill="#505050"/><g fill="#505050"><rect x="464" y="82.6" width="16" height="1"/><rect x="472" y="85.7" width="8" height="1"/><rect x="472" y="88.8" width="8" height="1"/><rect x="472" y="91.8" width="8" height="1"/><rect x="464" y="94.9" width="16" height="1"/><rect x="486" y="82.6" width="16" height="1"/><rect x="494" y="85.7" width="8" height="1"/><rect x="494" y="88.8" width="8" height="1"/><rect x="494" y="91.8" width="8" height="1"/><rect x="486" y="94.9" width="16" height="1"/></g><g fill="none" stroke="#3b78c0" stroke-width="1.6"><line x1="465" y1="89" x2="470.6" y2="89"/><polyline points="467.6,86.2 464.8,89 467.6,91.8"/><line x1="486" y1="89" x2="492" y2="89"/><polyline points="489.2,86.2 492,89 489.2,91.8"/></g><text x="0" y="0" transform="translate(466.5,64.5) rotate(-45)" font-family="Liberation Sans" font-size="11.5" fill="#505050">ab</text><g stroke="#505050" stroke-width="1.1" fill="none"><line x1="470.6" y1="65.3" x2="479.8" y2="56.2"/><polyline points="476.3,56.4 479.9,56.1 479.6,59.7"/></g><text x="518.4" y="58.9" font-family="Liberation Sans" font-size="11" fill="#444" stroke="#444" stroke-width="0.25" letter-spacing="-0.2">ab</text><text x="518.4" y="65.8" font-family="Liberation Sans" font-size="11" fill="#444" stroke="#444" stroke-width="0.25">c</text><path d="M529.8,61.4 v2.8 h-3.2 M528,62.6 l-1.5,1.6 1.5,1.6" fill="none" stroke="#3b78c0" stroke-width="1.2"/><g fill="none" stroke="#b4b0b4" stroke-width="1"><rect x="517.5" y="82.5" width="14" height="14" fill="#fbf6fb"/><line x1="517.5" y1="85.5" x2="531.5" y2="85.5"/><line x1="517.5" y1="93.5" x2="531.5" y2="93.5"/><line x1="524.5" y1="82.5" x2="524.5" y2="85.5"/><line x1="524.5" y1="93.5" x2="524.5" y2="96.5"/><line x1="519.5" y1="89.5" x2="529.5" y2="89.5" stroke-width="1.2"/><polyline points="521.4,87.4 519.4,89.5 521.4,91.6" stroke-width="1.2"/><polyline points="527.6,87.4 529.6,89.5 527.6,91.6" stroke-width="1.2"/></g><rect x="660.2" y="82" width="15.9" height="8.9" fill="#3b78c0"/><polygon points="662.8,84.8 663.8,84.8 663.8,83.6 672.6,83.6 672.6,84.8 673.6,84.8 673.6,88.4 672.6,88.4 672.6,89.4 663.8,89.4 663.8,88.4 662.8,88.4" fill="#fff"/><circle cx="667.9" cy="86.4" r="2.1" fill="#3b78c0"/><rect x="668.5" y="87.3" width="8.3" height="10.5" fill="#f3f3f3"/><rect x="663.2" y="92.3" width="7.5" height="6.5" fill="#f3f3f3"/><g fill="#e9bd6e"><rect x="669.2" y="88" width="7" height="2.8" rx="1.4"/><rect x="669.8" y="91.6" width="5.8" height="1.3" rx="0.6"/><rect x="671" y="93.6" width="4.6" height="1.3" rx="0.6"/><rect x="664" y="93" width="6.7" height="2.8" rx="1.4"/><rect x="664.4" y="96.3" width="5.8" height="1.3" rx="0.6"/></g><text x="695.6" y="95.6" font-family="Liberation Sans" font-size="15" fill="#505050" stroke="#505050" stroke-width="0.3">%</text><circle cx="724.3" cy="87.9" r="1.8" fill="#505050"/><path d="M725.9,88.2 q0,2.9 -4,4.4" fill="none" stroke="#505050" stroke-width="1.5"/><g font-family="Liberation Sans" font-size="8.5" fill="#333" stroke="#333" stroke-width="0.2"><text x="754" y="88.8">.0</text><text x="749.2" y="95.7">.00</text><text x="771.3" y="88.8">.00</text><text x="776.3" y="95.7">.0</text></g><g fill="none" stroke="#3b78c0" stroke-width="1.3"><line x1="747.5" y1="86.4" x2="753.8" y2="86.4"/><polyline points="749.6,84.3 747.4,86.4 749.6,88.5"/><line x1="769" y1="93.2" x2="775.4" y2="93.2"/><polyline points="773.3,91.1 775.5,93.2 773.3,95.3"/></g><rect x="826.9" y="45.9" width="26" height="23" fill="#fff" stroke="#7a7a7a" stroke-width="1"/><g fill="#e0603a"><rect x="834.2" y="46.4" width="5.5" height="5.1"/><rect x="834.2" y="57.8" width="8.4" height="5"/></g><g fill="#3b78c0"><rect x="834.2" y="52" width="10.6" height="5"/><rect x="834.2" y="63.7" width="3.6" height="5.2"/></g><g stroke="#7a7a7a" stroke-width="1"><line x1="833.7" y1="45.9" x2="833.7" y2="68.9"/><line x1="846.9" y1="45.9" x2="846.9" y2="68.9"/><line x1="826.9" y1="51.5" x2="852.9" y2="51.5"/><line x1="826.9" y1="57.3" x2="852.9" y2="57.3"/><line x1="826.9" y1="63.2" x2="852.9" y2="63.2"/></g><rect x="839.3" y="61" width="17.5" height="14.7" fill="#f3f3f3"/><rect x="840.8" y="62.5" width="14.5" height="11.7" fill="#fff" stroke="#7a7a7a" stroke-width="1"/><g stroke="#505050" stroke-width="1"><line x1="844.3" y1="66.5" x2="851.7" y2="66.5"/><line x1="844.3" y1="69.5" x2="851.7" y2="69.5"/><line x1="846" y1="72" x2="850" y2="64"/></g><rect x="891.8" y="47.9" width="23.7" height="19.5" fill="#fff"/><rect x="897.7" y="52.4" width="17.8" height="15" fill="#bcd2ea"/><g stroke="#7a7a7a" stroke-width="1" fill="none"><rect x="891.8" y="47.9" width="23.7" height="19.5"/><line x1="897.7" y1="47.9" x2="897.7" y2="67.4"/><line x1="903.7" y1="47.9" x2="903.7" y2="67.4"/><line x1="909.7" y1="47.9" x2="909.7" y2="67.4"/><line x1="891.8" y1="52.4" x2="915.5" y2="52.4"/><line x1="891.8" y1="57.3" x2="915.5" y2="57.3"/><line x1="891.8" y1="62.4" x2="915.5" y2="62.4"/></g><polygon points="912.00,60.40 920.30,51.90 921.00,60.00 915.80,64.30 913.00,67.00 909.80,69.50 907.00,67.00" fill="#f3f3f3"/><polygon points="913.00,60.40 919.80,52.90 920.00,59.50 915.30,63.30" fill="#7a7a7a"/><polygon points="909.30,64.50 912.40,62.00 914.60,64.30 911.50,67.00" fill="#7a7a7a"/><path d="M897.7,74.8 L904.6,67.8 A3.5,3.5 0 1 1 910.2,72.2 Q907,74.8 897.7,74.8 z" fill="#3b78c0" stroke="#f3f3f3" stroke-width="0.6"/><path d="M905.5,68.6 q1.6,-1.6 3.3,-0.6 q0.6,1.8 -0.2,3.2 q-1.2,-1.6 -3.1,-2.6 z" fill="#fff"/><rect x="941.5" y="45.5" width="25" height="21" fill="#fff" stroke="#7a7a7a" stroke-width="1"/><rect x="946.5" y="50.5" width="14" height="10" fill="#bcd2ea"/><g stroke="#7a7a7a" stroke-width="1"><line x1="946.5" y1="45.8" x2="946.5" y2="66.4"/><line x1="960.5" y1="45.8" x2="960.5" y2="66.4"/><line x1="941.7" y1="50.5" x2="966.9" y2="50.5"/><line x1="941.7" y1="60.5" x2="966.9" y2="60.5"/></g><polygon points="962.00,58.40 970.30,49.90 971.00,58.00 965.80,62.30 963.00,65.00 959.80,67.50 957.00,65.00" fill="#f3f3f3"/><polygon points="963.00,58.40 969.80,50.90 970.00,57.50 965.30,61.30" fill="#7a7a7a"/><polygon points="959.30,62.50 962.40,60.00 964.60,62.30 961.50,65.00" fill="#7a7a7a"/><path d="M947.7,72.8 L954.6,65.8 A3.5,3.5 0 1 1 960.2,70.2 Q957,72.8 947.7,72.8 z" fill="#3b78c0" stroke="#f3f3f3" stroke-width="0.6"/><path d="M955.5,66.6 q1.6,-1.6 3.3,-0.6 q0.6,1.8 -0.2,3.2 q-1.2,-1.6 -3.1,-2.6 z" fill="#fff"/><g stroke="#b9b3b9" stroke-width="1"><rect x="1000.7" y="45.7" width="14" height="5" fill="#f5eef5"/><line x1="1007.4" y1="45.7" x2="1007.4" y2="50.7"/><rect x="1011.8" y="53.6" width="14" height="5" fill="#dcd6dc"/><line x1="1018.5" y1="53.6" x2="1018.5" y2="58.6"/><rect x="1000.7" y="61.6" width="14" height="10" fill="#f5eef5"/><line x1="1007.4" y1="61.6" x2="1007.4" y2="71.6"/><line x1="1000.7" y1="66.6" x2="1014.7" y2="66.6"/></g><g fill="none" stroke="#a8a8a8" stroke-width="1.6"><line x1="1001.5" y1="55.9" x2="1007.8" y2="55.9"/><polyline points="1004,53.6 1001.6,55.9 1004,58.2"/></g><g stroke="#6d6d6d" stroke-width="1.1" fill="#fff"><rect x="1041.5" y="45.5" width="14" height="5"/><line x1="1048.5" y1="45.5" x2="1048.5" y2="50.5"/><rect x="1041.5" y="62.5" width="14" height="10"/><line x1="1048.5" y1="62.5" x2="1048.5" y2="72.5"/><line x1="1041.5" y1="67.5" x2="1055.5" y2="67.5"/></g><rect x="1047.5" y="53.5" width="8" height="5" fill="#bcd2ea" stroke="#6d6d6d" stroke-width="1.1"/><polygon points="1056,53.5 1060,56 1056,58.5" fill="#bcd2ea"/><g fill="#d9502e"><polygon points="1055.21,52.47 1069.36,64.17 1070.04,63.43 1057.39,50.13"/><polygon points="1057.20,63.75 1070.31,51.89 1069.69,51.11 1055.20,61.25"/></g><g fill="none" stroke="#3b78c0" stroke-width="1.1"><line x1="1085.5" y1="46.5" x2="1103.5" y2="46.5"/><line x1="1083.5" y1="44" x2="1083.5" y2="49"/><line x1="1105.5" y1="44" x2="1105.5" y2="49"/><polyline points="1088.3,44 1085.6,46.5 1088.3,49" stroke-width="1.3"/><polyline points="1100.7,44 1103.4,46.5 1100.7,49" stroke-width="1.3"/></g><rect x="1083.5" y="50.5" width="27" height="20" fill="#fff" stroke="#7a7a7a" stroke-width="1"/><rect x="1091" y="56" width="7" height="9" fill="#3b78c0"/><g stroke="#8a8a8a" stroke-width="1"><line x1="1090.5" y1="50.5" x2="1090.5" y2="70.5"/><line x1="1098.5" y1="50.5" x2="1098.5" y2="70.5"/><line x1="1105.5" y1="50.5" x2="1105.5" y2="70.5"/><line x1="1083.5" y1="55.5" x2="1110.5" y2="55.5"/><line x1="1083.5" y1="65.5" x2="1110.5" y2="65.5"/></g><path d="M1083.5,70.5 v3.5 h6 l2.5,-3.5 M1093,70.5 v3.5 h5.5 l3,-3.5" fill="#fff" stroke="#7a7a7a" stroke-width="1"/><path d="M1153,45.5 v-1.6 h-14.2 l6.8,6.7 -6.8,6.7 h14.2 v-1.6" fill="none" stroke="#444" stroke-width="2"/><rect x="1139.6" y="66.9" width="13.2" height="14.2" fill="#fff" stroke="#6d6d6d" stroke-width="1"/><rect x="1139.1" y="66.4" width="14.2" height="3" fill="#6d6d6d"/><g fill="none" stroke="#3b78c0" stroke-width="2"><line x1="1146.2" y1="70.5" x2="1146.2" y2="78.5"/><polyline points="1142.6,75 1146.2,78.6 1149.8,75"/></g><polygon points="1141.4,97.7 1148.6,90.5 1152.4,94.3 1145.2,101.5" fill="#e8849c"/><polygon points="1139.6,99.5 1141.4,97.7 1145.2,101.5 1143.4,103.3" fill="#f0b4c2"/><g stroke="#c2c2c2" stroke-width="2.2" fill="none"><line x1="149.5" y1="148" x2="159.5" y2="158"/><line x1="159.5" y1="148" x2="149.5" y2="158"/><polyline points="185,153.5 189,157.5 197.5,148.5"/></g><text x="220.5" y="158" font-family="Liberation Serif" font-style="italic" font-weight="bold" font-size="13" fill="#505050">f</text><text x="226" y="158" font-family="Liberation Serif" font-style="italic" font-weight="bold" font-size="10" fill="#505050">x</text><g fill="#9a9a9a"><rect x="120" y="148" width="2" height="2"/><rect x="120" y="152" width="2" height="2"/><rect x="120" y="156" width="2" height="2"/></g><g fill="none" stroke="#fff" stroke-width="1.1"><path d="M654.6,25.8 L652.3,22.4 A5.3,5.3 0 1 1 660.7,22.4 L658.4,25.8 Z"/><rect x="654.6" y="25.8" width="3.8" height="2.1"/><line x1="655.3" y1="29.6" x2="657.8" y2="29.6"/></g></svg>
</body></html>
